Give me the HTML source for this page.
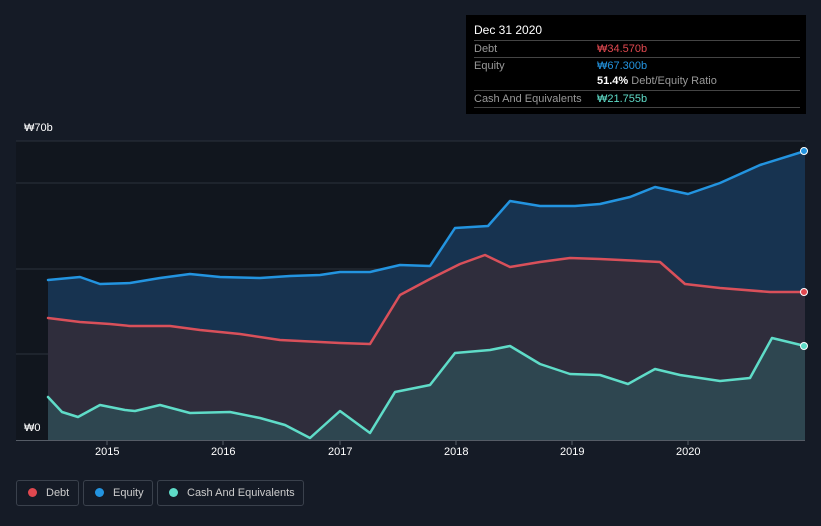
<!DOCTYPE html><html><head><style>
body{margin:0;width:821px;height:526px;background:#151b26;font-family:"Liberation Sans",sans-serif;overflow:hidden;position:relative}
.tt{position:absolute;left:466px;top:15px;width:340px;height:99px;background:#000;color:#fff;font-size:11px}
.r{position:absolute;left:8px;width:326px;border-top:1px solid #444;height:16px;line-height:16px;color:#999;white-space:nowrap}
.r span{position:absolute;left:123px}
.lg{position:absolute;top:480px;height:26px;border:1px solid #3a414c;border-radius:3px;color:#ccc;font-size:11px;line-height:24px;box-sizing:border-box;white-space:nowrap;overflow:hidden}
.lg i{display:inline-block;width:9px;height:9px;border-radius:50%;margin:0 9px 0 11px;vertical-align:-1px}
.ax{position:absolute;color:#fff;font-size:11px}
</style></head><body>
<svg width="821" height="526" style="position:absolute;left:0;top:0">
<rect x="16" y="141" width="789" height="299" fill="#11161e"/>
<g stroke="#2c323c" stroke-width="1"><line x1="16" y1="141" x2="805" y2="141"/><line x1="16" y1="183" x2="805" y2="183"/><line x1="16" y1="269" x2="805" y2="269"/><line x1="16" y1="354" x2="805" y2="354"/></g>
<path d="M48,280 L80,277 100,284 130,283 160,278 190,274 220,277 260,278 290,276 320,275 340,272 370,272 400,265 430,266 455,228 488,226 510,201 540,206 575,206 600,204 630,197 655,187 688,194 720,183 760,165 805,151 L805,440 48,440Z" fill="#173350"/>
<path d="M48,318 L80,322 110,324 130,326 170,326 200,330 240,334 280,340 340,343 370,344 400,295 430,279 460,264 485,255 510,267 540,262 570,258 600,259 660,262 685,284 720,288 770,292 805,292 L805,440 48,440Z" fill="#2f2d3c"/>
<path d="M48,397 L62,412 78,417 100,405 125,410 135,411 160,405 190,413 230,412 260,418 285,425 310,438 340,411 370,433 395,392 430,385 455,353 490,350 510,346 540,364 570,374 600,375 628,384 655,369 680,375 720,381 750,378 772,338 805,346 L805,440 48,440Z" fill="#2e4650"/>
<g fill="none" stroke-width="2.5" stroke-linejoin="round" stroke-linecap="round">
<path d="M48,280 L80,277 100,284 130,283 160,278 190,274 220,277 260,278 290,276 320,275 340,272 370,272 400,265 430,266 455,228 488,226 510,201 540,206 575,206 600,204 630,197 655,187 688,194 720,183 760,165 805,151" stroke="#2394e0"/>
<path d="M48,318 L80,322 110,324 130,326 170,326 200,330 240,334 280,340 340,343 370,344 400,295 430,279 460,264 485,255 510,267 540,262 570,258 600,259 660,262 685,284 720,288 770,292 805,292" stroke="#d9505a"/>
<path d="M48,397 L62,412 78,417 100,405 125,410 135,411 160,405 190,413 230,412 260,418 285,425 310,438 340,411 370,433 395,392 430,385 455,353 490,350 510,346 540,364 570,374 600,375 628,384 655,369 680,375 720,381 750,378 772,338 805,346" stroke="#5fdcc8"/>
</g>
<circle cx="804" cy="151" r="3.5" fill="#2394e0" stroke="#fff"/>
<circle cx="804" cy="292" r="3.5" fill="#e0484f" stroke="#fff"/>
<circle cx="804" cy="346" r="3.5" fill="#5fdcc8" stroke="#fff"/>
<line x1="16" y1="440.5" x2="805" y2="440.5" stroke="#555c66"/>
<g stroke="#555c66"><line x1="107" y1="441" x2="107" y2="445"/><line x1="223" y1="441" x2="223" y2="445"/><line x1="340" y1="441" x2="340" y2="445"/><line x1="456" y1="441" x2="456" y2="445"/><line x1="572" y1="441" x2="572" y2="445"/><line x1="688" y1="441" x2="688" y2="445"/></g>
</svg>
<div class="ax" style="left:24px;top:122px">₩70b</div>
<div class="ax" style="left:24px;top:422px">₩0</div>
<div class="ax" style="left:95px;top:446px">2015</div>
<div class="ax" style="left:211px;top:446px">2016</div>
<div class="ax" style="left:328px;top:446px">2017</div>
<div class="ax" style="left:444px;top:446px">2018</div>
<div class="ax" style="left:560px;top:446px">2019</div>
<div class="ax" style="left:676px;top:446px">2020</div>
<div class="tt">
<div style="position:absolute;left:8px;top:8px;font-size:12px">Dec 31 2020</div>
<div class="r" style="top:25px">Debt<span style="color:#e0484f">₩34.570b</span></div>
<div class="r" style="top:42px">Equity<span style="color:#2394e0">₩67.300b</span></div>
<div class="r" style="top:58px;border:0"><span style="color:#fff"><b>51.4%</b> <span style="position:static;color:#999">Debt/Equity Ratio</span></span></div>
<div class="r" style="top:75px">Cash And Equivalents<span style="color:#5fdcc8">₩21.755b</span></div>
<div class="r" style="top:92px;height:0"></div>
</div>
<div class="lg" style="left:16px;width:63px"><i style="background:#e0484f"></i>Debt</div>
<div class="lg" style="left:83px;width:70px"><i style="background:#2394e0"></i>Equity</div>
<div class="lg" style="left:157px;width:147px"><i style="background:#5fdcc8"></i>Cash And Equivalents</div>
</body></html>
